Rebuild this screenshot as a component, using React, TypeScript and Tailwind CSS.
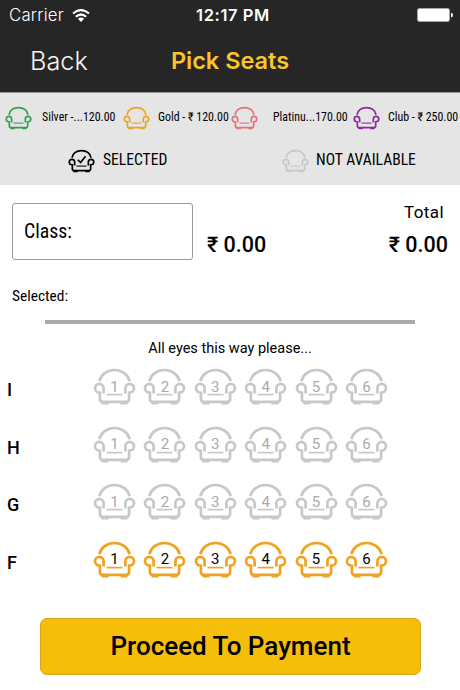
import clsx from 'clsx';

type SeatProps = {
  className?: string;
  checked?: boolean;
};

const legend = [
  { label: 'Silver -...120.00', color: 'text-[#35a04e]', spacing: 'ml-[5px]', width: 'w-[110px]', textGap: 'pl-[10px]' },
  { label: 'Gold - ₹ 120.00', color: 'text-[#f0a321]', spacing: 'ml-[8px]', width: 'w-[107px]', textGap: 'pl-[8px]' },
  { label: 'Platinu...170.00', color: 'text-[#e8707a]', spacing: 'ml-[1px]', width: 'w-[114px]', textGap: 'pl-[15px]' },
  { label: 'Club - ₹ 250.00', color: 'text-[#8e2a9c]', spacing: 'ml-[8px]', width: 'w-[107px]', textGap: 'pl-[8px]' },
];

const rows = [
  { name: 'I', available: false },
  { name: 'H', available: false },
  { name: 'G', available: false },
  { name: 'F', available: true },
];

const seats = [1, 2, 3, 4, 5, 6];

function Seat({ className, checked }: SeatProps) {
  return (
    <svg viewBox="0 0 43 37" fill="none" stroke="currentColor" strokeWidth="2.7" className={clsx('shrink-0', className)}>
      <path d="M6.3 13.2C8 6.5 14 2 21.5 2S35 6.5 36.7 13.2" />
      <path d="M10.6 25.5V20.2a4.3 4.3 0 1 0-4.3 4.3l.6.1v6.4q0 2.8 2.8 2.8h23.6q2.8 0 2.8-2.8v-6.4l.6-.1a4.3 4.3 0 1 0-4.3-4.3v5.3" />
      <path d="M13.5 26.6h16" strokeWidth="1.7" />
      <path d="M8.5 35.4h7M27.5 35.4h7" strokeWidth="2.4" />
      {checked && <path d="M15.5 16.5l4.5 4.5 8-10" strokeWidth="2.6" />}
    </svg>
  );
}

function StatusBar() {
  return (
    <div className="grid h-[30px] grid-cols-3 items-center px-[9px] font-['Inter',sans-serif] text-white">
      <div className="mt-[2px] flex items-center gap-[8px]">
        <span className="text-[16.8px] font-light tracking-[0.2px]">Carrier</span>
        <svg viewBox="0 0 18 13" className="mt-[-2px] h-[13px] w-[18px]" fill="none" stroke="currentColor" strokeWidth="2.2">
          <path d="M1 4.5Q9-2.4 17 4.5" />
          <path d="M3.8 7.8Q9 3.2 14.2 7.8" />
          <path d="M9 13L5.9 9.8Q9 7.3 12.1 9.8Z" fill="currentColor" stroke="none" />
        </svg>
      </div>
      <span className="pl-[6px] text-center text-[16.5px] font-semibold tracking-[0.6px] whitespace-nowrap">12:17 PM</span>
      <svg viewBox="0 0 36 14" className="mr-[-2px] h-[14px] w-[36px] justify-self-end">
        <rect x="0.5" y="0.5" width="32" height="13" rx="2" fill="white" stroke="#a5a5a5" />
        <path d="M34 4.5q2 .5 2 2.5t-2 2.5z" fill="white" />
      </svg>
    </div>
  );
}

export default function App() {
  return (
    <main className="flex h-[690px] w-[460px] flex-col overflow-hidden bg-white font-['Roboto',sans-serif] text-black">
      <header className="h-[92px] bg-[#262626]">
        <StatusBar />
        <div className="grid h-[62px] grid-cols-3 items-center font-['Inter',sans-serif]">
          <button className="pl-[30px] text-left text-[25.3px] font-light text-[#f5f5f5]">Back</button>
          <h1 className="text-center text-[23.5px] font-semibold whitespace-nowrap text-[#fac52c]">Pick Seats</h1>
        </div>
      </header>

      <section className="h-[93px] border-t border-[#999] bg-[#e5e5e5] font-['Roboto_Condensed','Roboto',sans-serif]">
        <div className="flex h-[50px] items-center">
          {legend.map((item) => (
            <div key={item.label} className={clsx('flex shrink-0 items-center', item.spacing, item.width)}>
              <Seat className={clsx('h-[24px] w-[27px]', item.color)} />
              <span className={clsx('text-[11.9px] whitespace-nowrap', item.textGap)}>{item.label}</span>
            </div>
          ))}
        </div>
        <div className="flex h-[35px] items-center">
          <div className="ml-[68px] flex w-[214px] items-center gap-[8px]">
            <Seat checked className="h-[24px] w-[27px]" />
            <span className="text-[15.6px]">SELECTED</span>
          </div>
          <div className="flex items-center gap-[7px]">
            <Seat className="h-[24px] w-[27px] text-[#c8c8c8]" />
            <span className="text-[15.6px]">NOT AVAILABLE</span>
          </div>
        </div>
      </section>

      <section className="flex h-[76px] items-start pt-[18px] pr-[12px] pl-[12px]">
        <div className="flex h-[57px] w-[181px] items-center rounded-[3px] border border-[#999] pl-[11px] font-['Roboto_Condensed','Roboto',sans-serif] text-[19.8px]">
          Class:
        </div>
        <span className="mt-[28px] ml-[14px] text-[21.5px] leading-[28px] font-medium">₹ 0.00</span>
        <div className="ml-auto flex flex-col items-end">
          <span className="mt-[-2px] mr-[4px] text-[17px] leading-[22px] tracking-[0.4px]">Total</span>
          <span className="mt-[8px] text-[21.5px] leading-[28px] font-medium">₹ 0.00</span>
        </div>
      </section>

      <p className="mt-[25px] ml-[12px] h-[20px] font-['Roboto_Condensed','Roboto',sans-serif] text-[15.4px] leading-[20px]">Selected:</p>
      <div className="mt-[14px] ml-[45px] h-[4px] w-[370px] bg-[#a9a9a9]" />
      <p className="mt-[15px] h-[20px] text-center text-[14.5px] leading-[20px]">All eyes this way please...</p>

      <section className="mt-[-1px]">
        {rows.map((row) => (
          <div key={row.name} className="flex h-[57.5px] items-center">
            <span className="w-[93px] pt-[6px] pl-[7px] text-[18px] font-medium">{row.name}</span>
            <div className="flex gap-[7.4px]">
              {seats.map((seat) => (
                <button key={seat} className="grid h-[37px] w-[43px] place-items-center">
                  <Seat className={clsx('col-start-1 row-start-1 h-[37px] w-[43px]', row.available ? 'text-[#f0a321]' : 'text-[#c8c8c8]')} />
                  <span className={clsx('col-start-1 row-start-1 pt-px text-[15px] leading-none', row.available ? 'text-black' : 'text-[#aaa]')}>
                    {seat}
                  </span>
                </button>
              ))}
            </div>
          </div>
        ))}
      </section>

      <button className="mt-[30px] ml-[40px] h-[57px] w-[381px] rounded-[7px] border border-[#d7a318] bg-[#f5be0b] text-[26px] font-medium">
        Proceed To Payment
      </button>
    </main>
  );
}
